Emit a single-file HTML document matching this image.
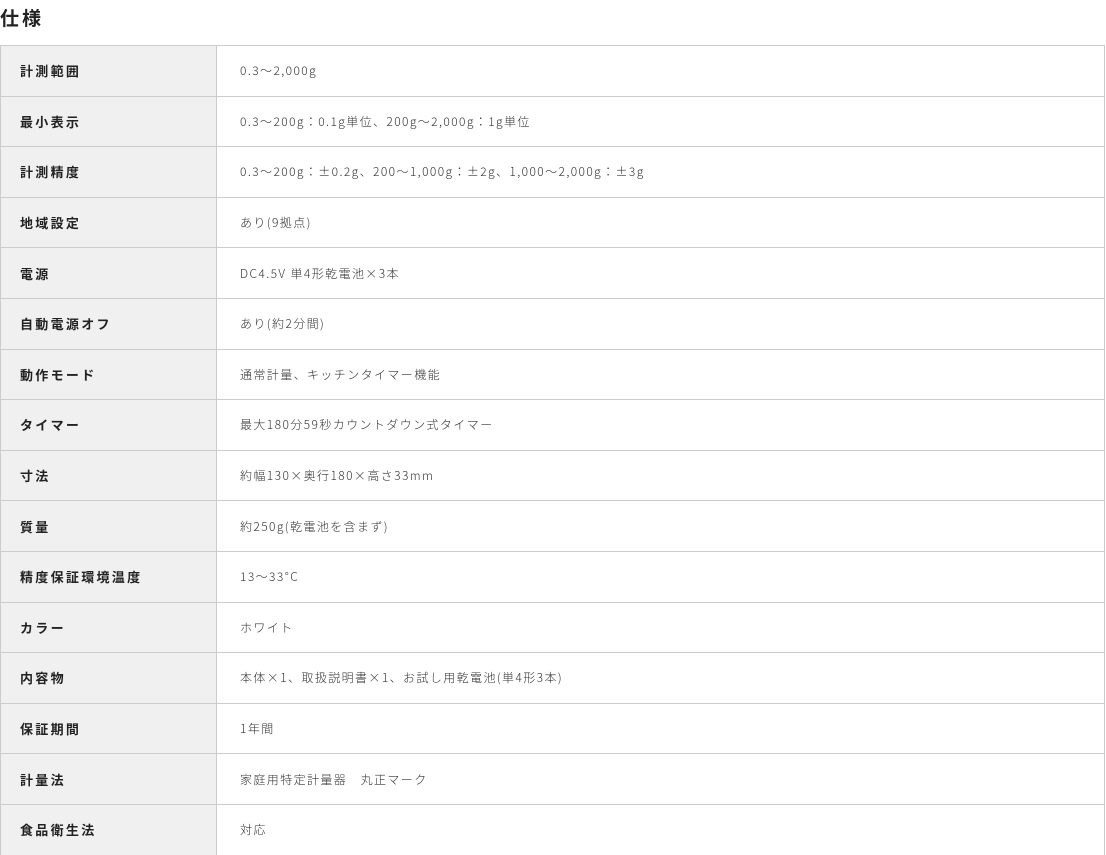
<!DOCTYPE html>
<html><head><meta charset="utf-8"><style>
body{margin:0;background:#fff;font-family:"Liberation Sans","Noto Sans CJK JP",sans-serif;width:1106px;height:852px;overflow:hidden;position:relative;color:#333}
h2{position:absolute;left:0;top:4px;margin:0;font-size:19px;font-weight:bold;letter-spacing:3px;color:#222}
.r{position:absolute;left:0;width:1105px;height:50.6px;border-top:1px solid #ccc;box-sizing:border-box}
.l{position:absolute;left:0;top:0;width:217px;height:100%;background:#f0f0f0;border-left:1px solid #ccc;border-right:1px solid #ccc;box-sizing:border-box;font-size:13px;font-weight:bold;padding-left:19px;display:flex;align-items:center;letter-spacing:2.3px;color:#222}
.v{position:absolute;left:240px;top:0;height:100%;display:flex;align-items:center;font-family:"Noto Sans CJK JP",sans-serif;font-weight:300;font-size:12px;letter-spacing:1.4px;color:#333}
.rb{position:absolute;right:0;top:0;width:1px;height:100%;background:#ccc}
</style></head><body>
<h2>仕様</h2>
<div id="t"></div>
<script>
var d=[["計測範囲","0.3～2,000g"],["最小表示","0.3～200g：0.1g単位、200g～2,000g：1g単位"],["計測精度","0.3～200g：±0.2g、200～1,000g：±2g、1,000～2,000g：±3g"],["地域設定","あり(9拠点)"],["電源","DC4.5V 単4形乾電池×3本"],["自動電源オフ","あり(約2分間)"],["動作モード","通常計量、キッチンタイマー機能"],["タイマー","最大180分59秒カウントダウン式タイマー"],["寸法","約幅130×奥行180×高さ33mm"],["質量","約250g(乾電池を含まず)"],["精度保証環境温度","13～33°C"],["カラー","ホワイト"],["内容物","本体×1、取扱説明書×1、お試し用乾電池(単4形3本)"],["保証期間","1年間"],["計量法","家庭用特定計量器　丸正マーク"],["食品衛生法","対応"]];
var h="";d.forEach(function(x,i){h+='<div class="r" style="top:'+(45+i*50.6)+'px"><div class="l">'+x[0]+'</div><div class="v">'+x[1]+'</div><div class="rb"></div></div>';});
document.getElementById("t").innerHTML=h;
</script>
</body></html>
